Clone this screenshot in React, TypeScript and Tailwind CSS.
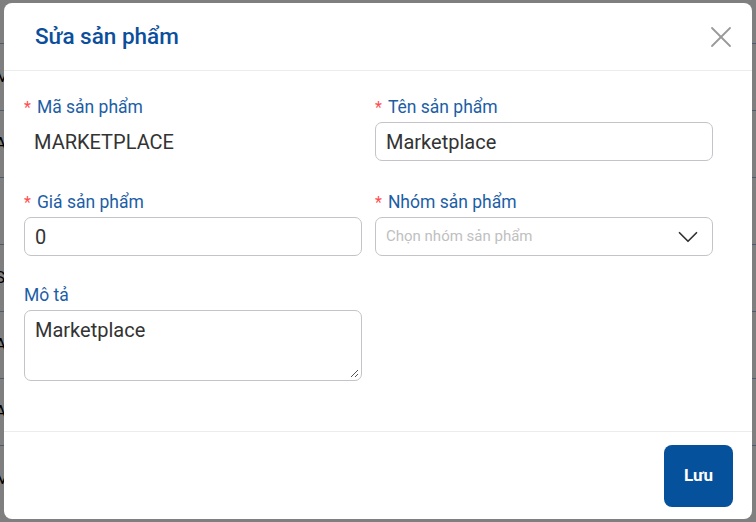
import { ChevronDown, X } from "lucide-react";

const bgRows = ["M", "A", "-", "S", "A", "A", "M"];

const Label = ({ text, required }: { text: string; required?: boolean }) => (
  <div className="flex items-center h-[25px] text-[17.5px] text-[#1c5ea6]">
    {required && <span className="text-[#ff4d4f] mr-[6px] text-[16px]">*</span>}
    {text}
  </div>
);

export default function App() {
  return (
    <div className="relative w-[756px] h-[522px] overflow-hidden bg-white font-['Roboto',sans-serif]">
      {/* page behind the modal */}
      <div className="flex flex-col pt-[43px]">
        {bgRows.map((r, i) => (
          <div
            key={i}
            className="h-[67px] border-t border-[#9bb7d8] flex items-center text-[17px] text-black"
          >
            <span className="-ml-[5px]">{r}</span>
          </div>
        ))}
      </div>
      <div className="absolute inset-0 bg-black/50" />

      {/* modal */}
      <div className="absolute left-[4px] top-[3px] w-[748px] h-[516px] bg-white rounded-[8px] flex flex-col">
        <div className="h-[68px] shrink-0 flex items-center justify-between pl-[31px] pr-[13px] border-b border-[#ececec]">
          <h2 className="text-[22.5px] font-medium text-[#0b4f9c]">Sửa sản phẩm</h2>
          <X className="w-[36px] h-[36px] text-[#9a9a9a]" strokeWidth={1.2} />
        </div>

        <div className="flex-1 pt-[24px] pl-[20px] border-b border-[#ececec]">
          <div className="grid grid-cols-[338px_338px] gap-x-[13px]">
            <div className="flex flex-col gap-[2px]">
              <Label text="Mã sản phẩm" required />
              <div className="h-[39px] flex items-center px-[10px] text-[20px] text-[#333]">
                MARKETPLACE
              </div>
            </div>
            <div className="flex flex-col gap-[2px]">
              <Label text="Tên sản phẩm" required />
              <div className="h-[39px] flex items-center px-[10px] text-[20px] text-[#333] border border-[#c4c4c8] rounded-[7px]">
                Marketplace
              </div>
            </div>
            <div className="flex flex-col gap-[2px] mt-[29px]">
              <Label text="Giá sản phẩm" required />
              <div className="h-[39px] flex items-center px-[10px] text-[20px] text-[#333] border border-[#c4c4c8] rounded-[7px]">
                0
              </div>
            </div>
            <div className="flex flex-col gap-[2px] mt-[29px]">
              <Label text="Nhóm sản phẩm" required />
              <div className="h-[39px] flex items-center justify-between pl-[10px] pr-[7px] border border-[#c4c4c8] rounded-[7px]">
                <span className="text-[15px] text-[#c0c0c0]">Chọn nhóm sản phẩm</span>
                <ChevronDown className="w-[34px] h-[34px] text-[#333]" strokeWidth={1.2} />
              </div>
            </div>
            <div className="flex flex-col gap-[2px] mt-[27px]">
              <Label text="Mô tả" />
              <div className="relative h-[71px] px-[10px] pt-[4px] text-[20px] text-[#333] border border-[#c4c4c8] rounded-[7px]">
                Marketplace
                <svg className="absolute right-[2px] bottom-[2px]" width="9" height="9" viewBox="0 0 9 9">
                  <path d="M8 1L1 8M8 5L5 8" stroke="#555" strokeWidth="1" />
                </svg>
              </div>
            </div>
          </div>
        </div>

        <div className="h-[87px] shrink-0 flex items-center justify-end pr-[19px]">
          <button className="w-[69px] h-[62px] rounded-[8px] bg-[#06519c] text-white text-[17px] font-bold">
            Lưu
          </button>
        </div>
      </div>
    </div>
  );
}
